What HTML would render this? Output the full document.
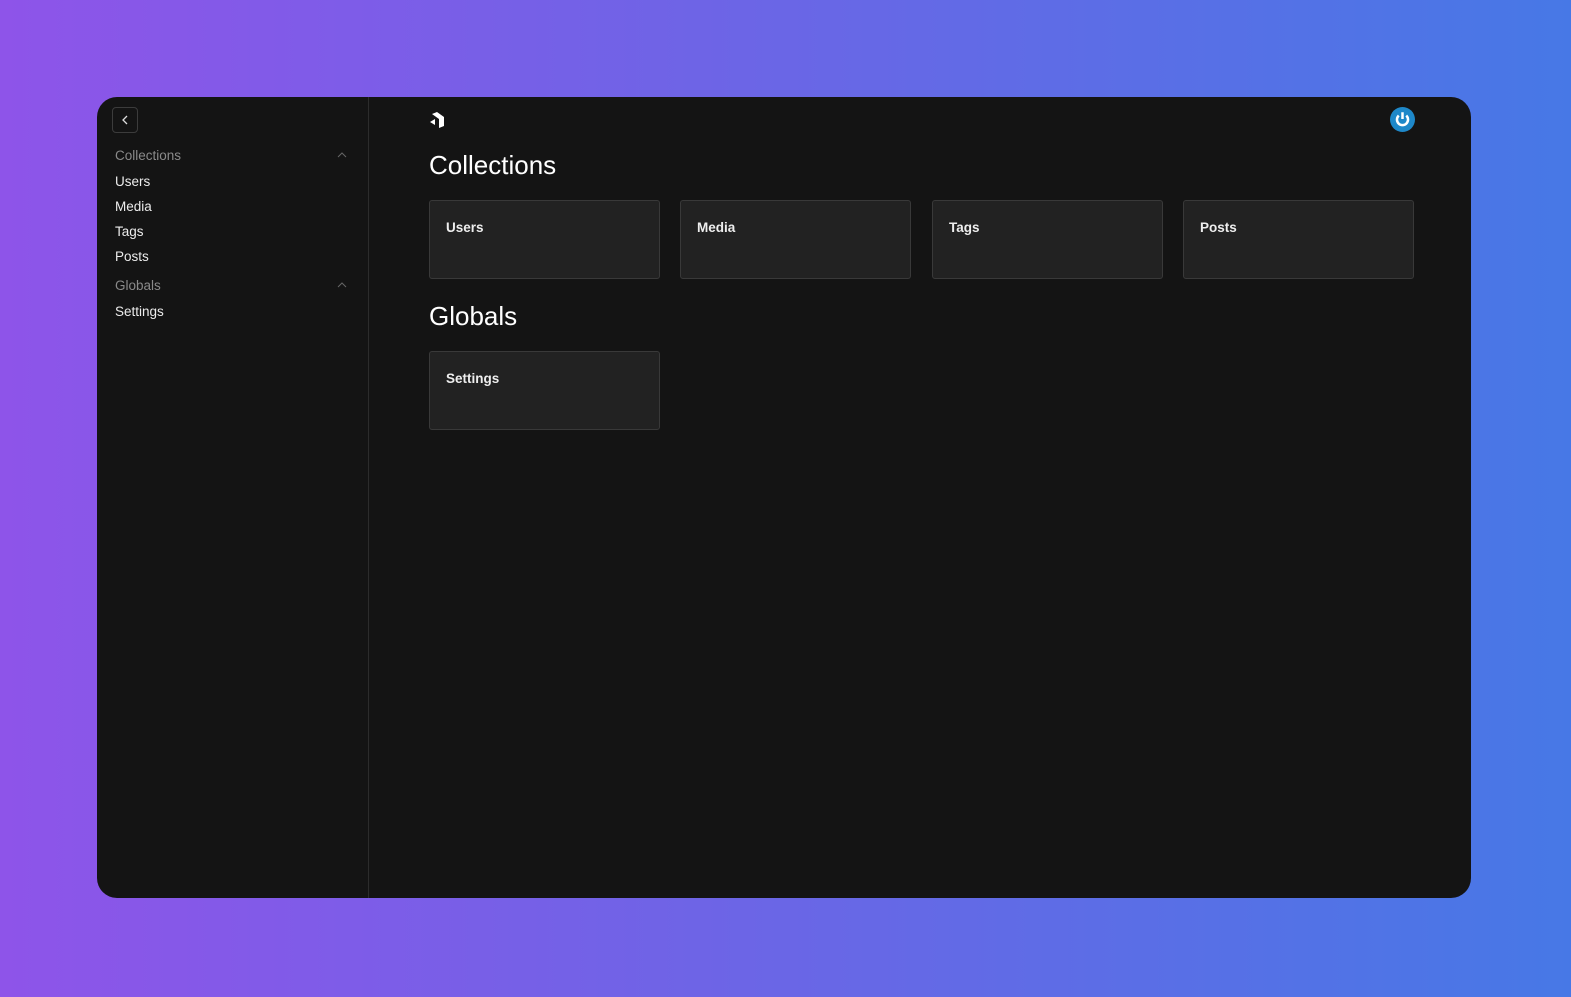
<!DOCTYPE html>
<html><head><style>
*{box-sizing:border-box;margin:0;padding:0}
body{width:1571px;height:997px;background:linear-gradient(90deg,#8e54e9,#6a66e6 50%,#4778e6);font-family:"Liberation Sans",sans-serif;position:relative;overflow:hidden}
.win{position:absolute;left:97px;top:97px;width:1374px;height:801px;background:#141414;border-radius:20px;overflow:hidden}
.side{position:absolute;left:0;top:0;width:272px;height:100%;border-right:1px solid #2c2c2c}
.back{position:absolute;left:15px;top:10px;width:26px;height:26px;border:1px solid #3c3c3c;border-radius:4px}
.grp{position:absolute;left:18px;font-size:13.5px;color:#8a8a8a}
.chev{position:absolute;left:240px;width:10px;height:10px}
.item{position:absolute;left:18px;font-size:13.5px;color:#ececec}
h1{position:absolute;left:332px;font-size:26px;font-weight:normal;color:#fff}
.card{position:absolute;width:231px;height:79px;background:#222;border:1px solid #393939;border-radius:3px}
.card span{position:absolute;left:16px;top:19px;font-size:13.5px;font-weight:bold;color:#eee}
</style></head><body>
<div class="win">
<div class="side">
<div class="back"><svg width="24" height="24" viewBox="0 0 24 24"><path d="M14 8l-4 4 4 4" stroke="#ddd" stroke-width="1.3" fill="none"/></svg></div>
<div class="grp" style="top:51px">Collections</div>
<svg class="chev" style="top:53px" viewBox="0 0 10 10"><path d="M1 7l4-4 4 4" stroke="#666" fill="none"/></svg>
<div class="item" style="top:77px">Users</div>
<div class="item" style="top:102px">Media</div>
<div class="item" style="top:127px">Tags</div>
<div class="item" style="top:152px">Posts</div>
<div class="grp" style="top:181px">Globals</div>
<svg class="chev" style="top:183px" viewBox="0 0 10 10"><path d="M1 7l4-4 4 4" stroke="#666" fill="none"/></svg>
<div class="item" style="top:207px">Settings</div>
</div>
<svg style="position:absolute;left:333px;top:14px" width="16" height="18" viewBox="0 0 16 18"><path d="M2 3l5-2 7 5v9l-5 2V8z" fill="#fff"/><path d="M0 11l5-3v6z" fill="#fff"/></svg>
<svg style="position:absolute;left:1293px;top:10px" width="25" height="25" viewBox="0 0 24 24"><circle cx="12" cy="12" r="12" fill="#1e88c9"/><path d="M8.4 8.2a5.3 5.3 0 1 0 7.2 0" stroke="#fff" stroke-width="2.4" fill="none"/><path d="M12 5v6.5" stroke="#fff" stroke-width="2.4"/></svg>
<h1 style="top:53px">Collections</h1>
<div class="card" style="left:332px;top:103px"><span>Users</span></div>
<div class="card" style="left:583px;top:103px"><span>Media</span></div>
<div class="card" style="left:835px;top:103px"><span>Tags</span></div>
<div class="card" style="left:1086px;top:103px"><span>Posts</span></div>
<h1 style="top:204px">Globals</h1>
<div class="card" style="left:332px;top:254px"><span>Settings</span></div>
</div>
</body></html>
